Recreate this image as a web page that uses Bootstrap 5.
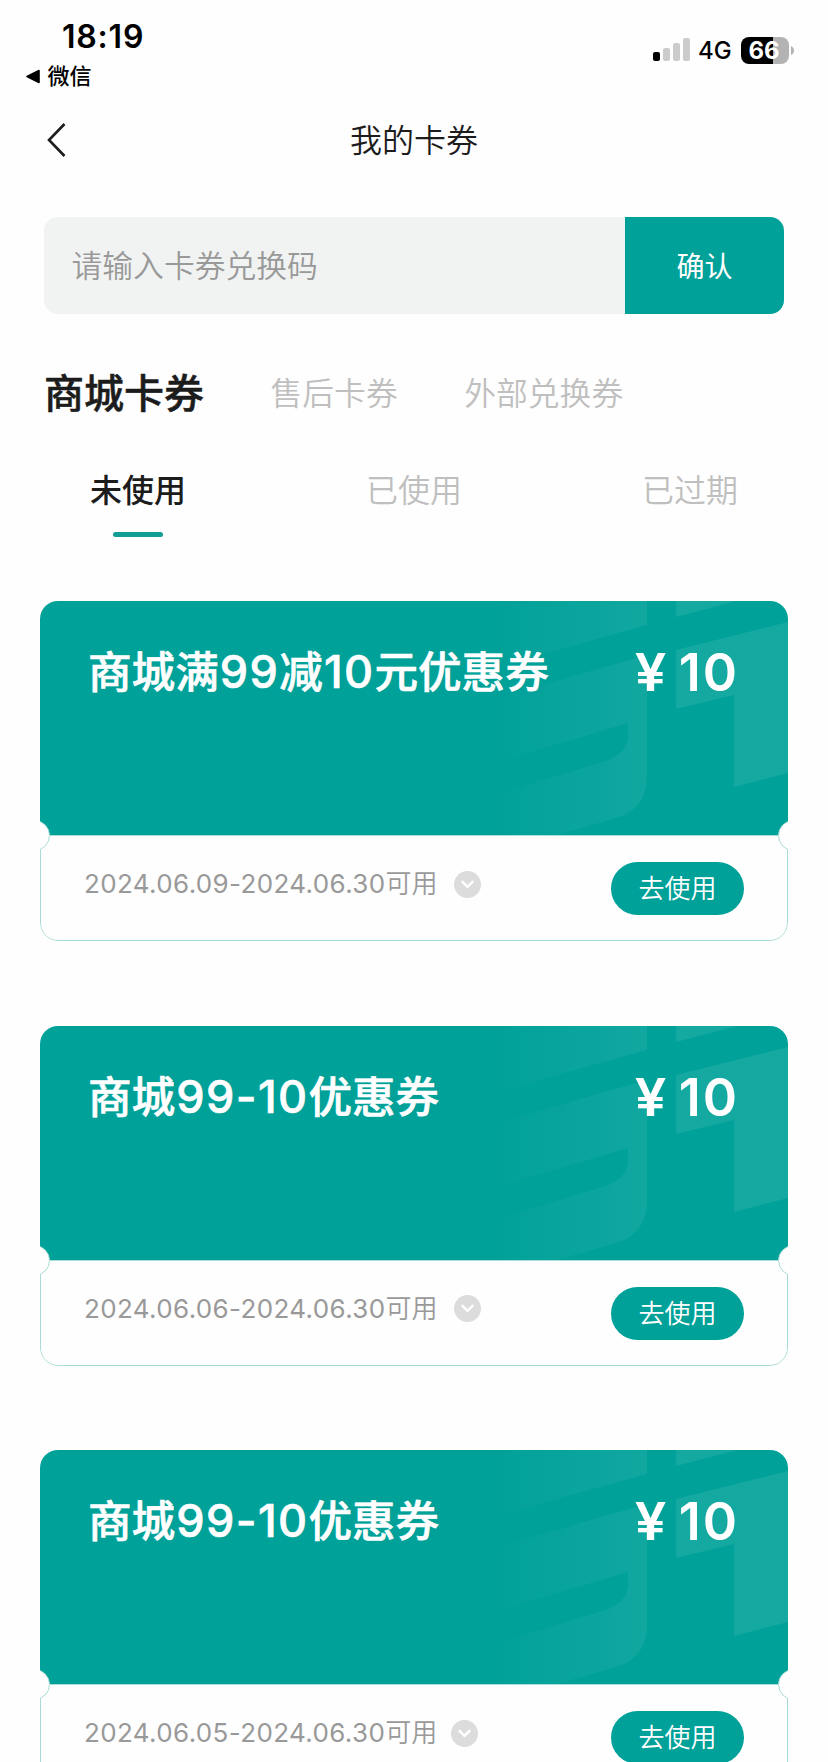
<!DOCTYPE html>
<html lang="zh-CN">
<head>
<meta charset="utf-8">
<meta name="viewport" content="width=device-width, initial-scale=1">
<title>我的卡券</title>
<link href="https://cdn.jsdelivr.net/npm/bootstrap@5.3.0/dist/css/bootstrap.min.css" rel="stylesheet">
<style>
:root{--teal:#00a199;--line:#a9dcd5}
body{font-family:Inter,"Noto Sans CJK SC",sans-serif;color:#1c1c1c;background:#fefefe;height:1762px;overflow:hidden;line-height:1.5}
.status{height:92px;color:#000}
.clock{font-size:32px;font-weight:600;line-height:34px;margin:20px 0 0 62px;letter-spacing:.8px}
.back-app{font-size:22px;font-weight:500;line-height:24px;margin:10px 0 0 26px;gap:7.5px}
.signals{margin:36px 33px 0 0;height:28px}
.net{font-size:24px;font-weight:450;line-height:28px;margin-left:7px;width:43px;padding-top:1px}
.battery{width:48px;height:27px;border-radius:8px;background:linear-gradient(90deg,#000 32px,#b3b3b3 32px);color:#fff;font-size:24px;font-weight:650;line-height:27px;padding-right:2px}
.title-bar{height:96px;padding:0 46px}
.title-bar h1{font-size:32px;font-weight:350;line-height:48px;padding-top:2px}
.redeem{height:97px;margin:29px 44px 0;border-radius:14px;overflow:hidden;width:740px}
.redeem .form-control{background:#f1f3f2;border:0;padding:1px 0 0 27.5px;font-size:30.8px;font-weight:350;color:#1c1c1c}
.redeem .form-control::placeholder{color:#999;opacity:1}
.redeem .btn{width:159px;background:var(--teal);color:#fff;font-size:28px;border:0;padding-top:9px}
.kinds{height:60px;margin:50px 44px 0;gap:66.5px}
.kinds .nav-link{padding:0;font-size:31.8px;line-height:60px;color:#bfbfbf;font-weight:350}
.kinds .nav-link.active{font-size:40px;font-weight:500;color:#1c1c1c;-webkit-text-stroke:.5px #1c1c1c}
.states{margin-top:43px}
.states .nav-link{padding:0;height:72px;font-size:32px;line-height:48px;color:#bfbfbf;font-weight:350}
.states .nav-link.active{color:#1c1c1c;font-weight:500}
.states .active::after{content:"";display:block;width:50px;height:5px;border-radius:3px;background:#129e93;margin:17px auto 0}
.coupons{padding:62px 40px 0;gap:84.5px}
.coupon{height:340px;border-radius:18px;overflow:hidden}
.face{height:234px;background:var(--teal);color:#fff;padding:38px 51px 0 48px}
.face h2{font-size:43.6px;font-weight:500;line-height:64px;margin-top:2px;-webkit-text-stroke:.6px #fff}
.num{font-size:45px;line-height:1;letter-spacing:1.4px;margin-left:1px}
.worth{font-size:52px;font-weight:600;line-height:66px;padding-top:1px}
.yen{transform:scaleX(1.08);margin-right:13px}
.sum{letter-spacing:2px;margin-right:-2px}
.pattern{position:absolute;left:0;top:0;width:748px;height:234px}
.slip{height:106px;border:1.5px solid var(--line);border-top-width:1px;border-radius:0 0 18px 18px;background:#fefefe;padding:0 43px 0 43px}
.slip time{font-size:26px;line-height:38px;color:#999;font-weight:350;margin-top:29px}
.days{letter-spacing:.36px;font-weight:400}
.slip svg{margin:34.5px 0 0 16px}
.coupon:last-child .slip svg{margin-left:14px}
.slip .btn{width:133px;height:53px;background:var(--teal);color:#fff;font-size:26px;font-weight:350;line-height:53px;padding:0;border:0;margin-top:26px}
.coupon::before,.coupon::after{content:"";position:absolute;z-index:2;top:219px;width:31px;height:31px;border-radius:50%;background:#fefefe;border:1.5px solid var(--line)}
.coupon::before{left:-21px}
.coupon::after{right:-21px}
</style>
</head>
<body>
<svg width="0" height="0" class="position-absolute">
  <defs>
  <linearGradient id="veil" gradientUnits="userSpaceOnUse" x1="450" y1="0" x2="640" y2="0"><stop offset="0" stop-color="#fff" stop-opacity="0"/><stop offset=".35" stop-color="#fff" stop-opacity=".03"/><stop offset="1" stop-color="#fff" stop-opacity=".08"/></linearGradient>
  <symbol id="pattern" viewBox="0 0 748 234">
    <g fill="url(#veil)">
      <path d="M450 0H607V24L520 48Q490 57 450 70Z"/>
      <path d="M450 99 607 54V174Q607 208 576 217L517 234H450V195L563 161Q588 153 588 134V122L450 163Z"/>
      <path d="M636 0H697L636 16Z"/>
      <path d="M636 49 748 21V172L694 186V94L636 108Z"/>
    </g>
  </symbol>
  <symbol id="more" viewBox="0 0 27 27"><circle cx="13.5" cy="13.5" r="13.5" fill="#dcdcdc"/><path d="M8.5 10.8 13.5 15.8 18.5 10.8" fill="none" stroke="#fff" stroke-width="2.6" stroke-linecap="round" stroke-linejoin="round"/></symbol>
  </defs>
</svg>

<header>
  <div class="status d-flex justify-content-between align-items-start">
    <div>
      <div class="clock">18:19</div>
      <div class="back-app d-flex align-items-center"><svg width="14" height="15" viewBox="0 0 14 15"><path d="M1 7.5 13 1.5V13.5Z" stroke="#000" stroke-width="1.6" stroke-linejoin="round"/></svg><span>微信</span></div>
    </div>
    <div class="signals d-flex align-items-center">
      <svg width="38" height="28" viewBox="0 0 38 28"><rect y="16" width="7" height="9" rx="2"/><g fill="#ccc"><rect x="10" y="12" width="7" height="13" rx="2"/><rect x="20" y="7" width="7" height="18" rx="2"/><rect x="30" y="2" width="7" height="23" rx="2"/></g></svg>
      <span class="net">4G</span>
      <span class="battery text-center">66</span>
      <svg class="ms-auto" width="6" height="27" viewBox="0 0 6 27"><path d="M2 9Q5 10.5 5 13.5T2 18Z" fill="#b3b3b3"/></svg>
    </div>
  </div>
  <nav class="title-bar d-flex align-items-center justify-content-between">
    <svg width="22" height="38" viewBox="0 0 22 38"><path d="M18.5 3 3 19 18.5 35" fill="none" stroke="#1c1c1c" stroke-width="2.6"/></svg>
    <h1 class="m-0">我的卡券</h1>
    <span style="width:22px"></span>
  </nav>
</header>

<main>
  <form class="redeem input-group flex-nowrap">
    <input class="form-control" type="text" placeholder="请输入卡券兑换码">
    <button class="btn" type="button">确认</button>
  </form>
  <nav class="kinds nav flex-nowrap">
    <a class="nav-link active" href="#">商城卡券</a><a class="nav-link" href="#">售后卡券</a><a class="nav-link" href="#">外部兑换券</a>
  </nav>
  <nav class="states nav row g-0 text-center">
    <a class="nav-link col-4 active" href="#">未使用</a><a class="nav-link col-4" href="#">已使用</a><a class="nav-link col-4" href="#">已过期</a>
  </nav>

  <section class="coupons d-flex flex-column">
    <article class="coupon position-relative flex-shrink-0">
      <div class="face d-flex justify-content-between align-items-start">
        <svg class="pattern"><use href="#pattern"/></svg>
        <h2 class="mb-0 position-relative">商城满<span class="num">99</span>减<span class="num">10</span>元优惠券</h2><span class="worth position-relative d-flex"><span class="yen">¥</span><span class="sum">10</span></span>
      </div>
      <div class="slip d-flex align-items-start"><time><span class="days">2024.06.09-2024.06.30</span>可用</time><svg width="27" height="27"><use href="#more"/></svg><button class="btn rounded-pill ms-auto" type="button">去使用</button></div>
    </article>
    <article class="coupon position-relative flex-shrink-0">
      <div class="face d-flex justify-content-between align-items-start">
        <svg class="pattern"><use href="#pattern"/></svg>
        <h2 class="mb-0 position-relative">商城<span class="num">99-10</span>优惠券</h2><span class="worth position-relative d-flex"><span class="yen">¥</span><span class="sum">10</span></span>
      </div>
      <div class="slip d-flex align-items-start"><time><span class="days">2024.06.06-2024.06.30</span>可用</time><svg width="27" height="27"><use href="#more"/></svg><button class="btn rounded-pill ms-auto" type="button">去使用</button></div>
    </article>
    <article class="coupon position-relative flex-shrink-0">
      <div class="face d-flex justify-content-between align-items-start">
        <svg class="pattern"><use href="#pattern"/></svg>
        <h2 class="mb-0 position-relative">商城<span class="num">99-10</span>优惠券</h2><span class="worth position-relative d-flex"><span class="yen">¥</span><span class="sum">10</span></span>
      </div>
      <div class="slip d-flex align-items-start"><time><span class="days">2024.06.05-2024.06.30</span>可用</time><svg width="27" height="27"><use href="#more"/></svg><button class="btn rounded-pill ms-auto" type="button">去使用</button></div>
    </article>
  </section>
</main>
<script src="https://cdn.jsdelivr.net/npm/bootstrap@5.3.0/dist/js/bootstrap.bundle.min.js"></script>
</body>
</html>
